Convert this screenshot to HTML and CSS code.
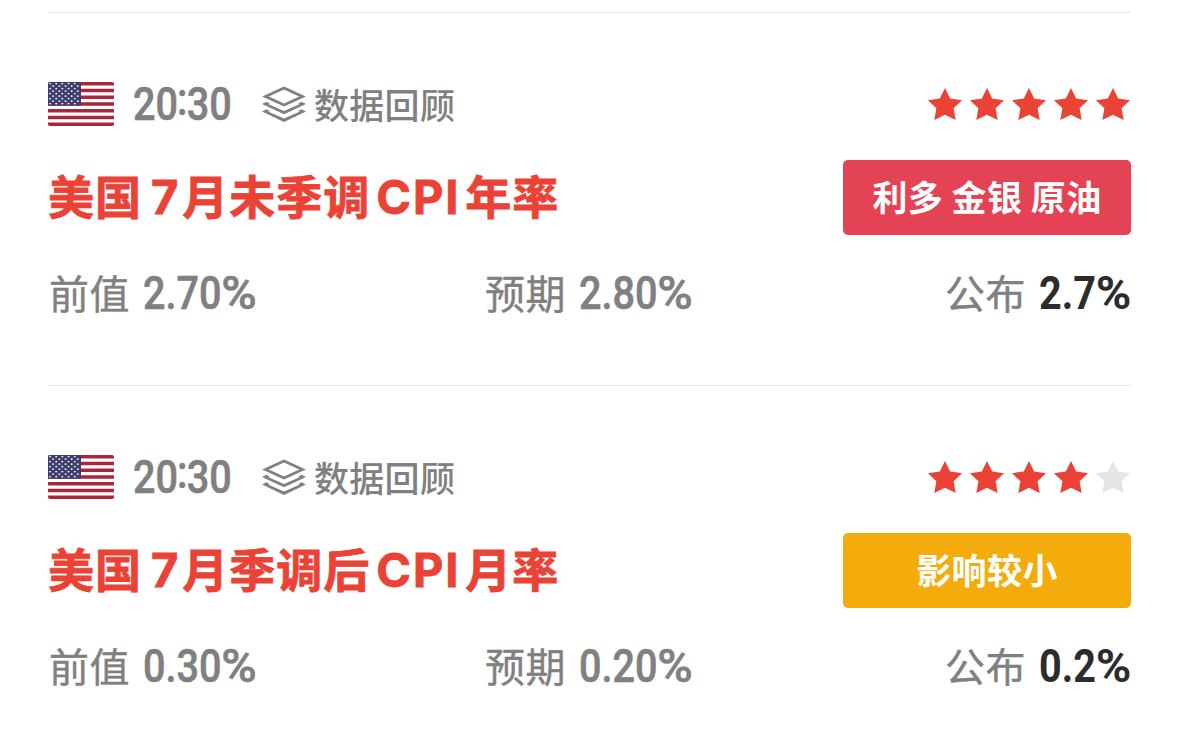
FILE: index.html
```html
<!DOCTYPE html>
<html lang="zh-CN">
<head>
    <meta charset="UTF-8">
    <meta name="viewport" content="width=device-width, initial-scale=1.0">
    <title>财经日历</title>
    <link rel="stylesheet" href="styles.css">
</head>
<body>
    <!-- shared shapes -->
    <svg class="defs" width="0" height="0">
        <defs>
            <pattern id="dots" width="6.2" height="5" patternUnits="userSpaceOnUse">
                <circle cx="2" cy="1.6" r="0.95" fill="#fff"/>
                <circle cx="5.1" cy="4.1" r="0.95" fill="#fff"/>
            </pattern>
            <symbol id="flag" viewBox="0 0 66 44">
                <rect width="66" height="44" fill="#fff"/>
                <path d="M0 1.7H66M0 8.46H66M0 15.22H66M0 22H66M0 28.76H66M0 35.54H66M0 42.3H66" stroke="#a8273a" stroke-width="3.4"/>
                <rect width="33" height="23.6" fill="#3c3b6e"/>
                <rect x="1" y="0.5" width="31" height="22.5" fill="url(#dots)"/>
            </symbol>
            <symbol id="layers" viewBox="0 0 44 36">
                <path d="M22 2 L40.5 10.5 L22 19 L3.5 10.5 Z" fill="none" stroke="#808080" stroke-width="2.8"/>
                <path d="M0 18 L4.5 15.8 L7.5 17.5 L6.6 18.3 L22 24.9 L37.4 18.3 L36.5 17.5 L39.5 15.8 L44 18 L22 28.3 Z" fill="#808080"/>
                <path d="M0 25.5 L4.5 23.3 L7.5 25 L6.6 25.8 L22 32.4 L37.4 25.8 L36.5 25 L39.5 23.3 L44 25.5 L22 35.9 Z" fill="#808080"/>
            </symbol>
            <symbol id="star" viewBox="0 0 34 32">
                <path d="M17 0 L22.2 10.4 L34 12.2 L25.6 20.3 L27.7 32 L17 26.8 L6.3 32 L8.4 20.3 L0 12.2 L11.8 10.4 Z"/>
            </symbol>
        </defs>
    </svg>

    <div class="list">
        <div class="item">
            <div class="head">
                <svg class="flag"><use href="#flag"/></svg>
                <div class="time"><span class="num">20<span class="colon">:</span>30</span></div>
                <svg class="layers"><use href="#layers"/></svg>
                <span class="review">数据回顾</span>
                <div class="stars">
                    <svg class="star"><use href="#star"/></svg>
                    <svg class="star"><use href="#star"/></svg>
                    <svg class="star"><use href="#star"/></svg>
                    <svg class="star"><use href="#star"/></svg>
                    <svg class="star"><use href="#star"/></svg>
                </div>
            </div>
            <div class="main">
                <h2 class="title">美国<span class="seven">7</span>月未季调<span class="cpi">CPI</span>年率</h2>
                <div class="badge badge-red">利多 金银 原油</div>
            </div>
            <div class="values">
                <div class="value"><span class="label">前值</span><div class="figure"><span class="num">2.70<span class="percent">%</span></span></div></div>
                <div class="value"><span class="label">预期</span><div class="figure"><span class="num">2.80<span class="percent">%</span></span></div></div>
                <div class="value"><span class="label">公布</span><div class="figure actual"><span class="num">2.7<span class="percent">%</span></span></div></div>
            </div>
        </div>

        <div class="item">
            <div class="head">
                <svg class="flag"><use href="#flag"/></svg>
                <div class="time"><span class="num">20<span class="colon">:</span>30</span></div>
                <svg class="layers"><use href="#layers"/></svg>
                <span class="review">数据回顾</span>
                <div class="stars">
                    <svg class="star"><use href="#star"/></svg>
                    <svg class="star"><use href="#star"/></svg>
                    <svg class="star"><use href="#star"/></svg>
                    <svg class="star"><use href="#star"/></svg>
                    <svg class="star off"><use href="#star"/></svg>
                </div>
            </div>
            <div class="main">
                <h2 class="title">美国<span class="seven">7</span>月季调后<span class="cpi">CPI</span>月率</h2>
                <div class="badge badge-orange">影响较小</div>
            </div>
            <div class="values">
                <div class="value"><span class="label">前值</span><div class="figure"><span class="num">0.30<span class="percent">%</span></span></div></div>
                <div class="value"><span class="label">预期</span><div class="figure"><span class="num">0.20<span class="percent">%</span></span></div></div>
                <div class="value"><span class="label">公布</span><div class="figure actual"><span class="num">0.2<span class="percent">%</span></span></div></div>
            </div>
        </div>
    </div>
</body>
</html>
```
FILE: styles.css
```css
* {
    margin: 0;
    padding: 0;
    box-sizing: border-box;
}

body {
    font-family: Inter, "Noto Sans CJK SC", sans-serif;
    background-color: #fff;
    color: #808080;
    text-autospace: no-autospace;
    overflow: hidden;
}

.defs {
    display: block;
}

.list {
    padding: 12px 48px 0;
}

.item {
    height: 373px;
    padding-top: 69px;
    border-top: 1px solid #e5e5e5;
}

.head {
    display: flex;
    align-items: center;
    height: 44px;
}

.flag {
    width: 66px;
    height: 44px;
    border-radius: 2px;
}

/* condensed figures */
.num {
    display: inline-block;
    font-family: Roboto, sans-serif;
    font-size: 46px;
    font-weight: 500;
    line-height: 50px;
    white-space: nowrap;
    transform: scaleX(0.86);
    transform-origin: left center;
    -webkit-text-stroke: 0.6px;
}

.percent {
    display: inline-block;
    transform: scaleX(1.22);
    transform-origin: left center;
}

.time {
    width: 98px;
    margin-left: 19px;
}

.colon {
    display: inline-block;
    margin: 0 -1px;
    transform: translateY(-5px);
}

.layers {
    width: 44px;
    height: 36px;
    margin-left: 31px;
}

.review {
    margin-left: 8px;
    padding-bottom: 1px;
    font-family: "Noto Sans CJK SC", sans-serif;
    font-size: 35px;
    line-height: 44px;
    font-weight: 500;
    letter-spacing: 0.3px;
}

.stars {
    display: flex;
    gap: 8px;
    margin-left: auto;
    margin-right: 1px;
}

.star {
    width: 34px;
    height: 32px;
    fill: #ea4335;
}

.star.off {
    fill: #e5e5e5;
}

.main {
    display: flex;
    align-items: center;
    justify-content: space-between;
    height: 75px;
    margin-top: 34px;
}

.title {
    color: #ea4335;
    font-size: 46px;
    font-weight: 700;
    line-height: 73px;
    padding-bottom: 2px;
    letter-spacing: 1px;
    white-space: nowrap;
    -webkit-text-stroke: 0.8px #ea4335;
}

.seven,
.cpi {
    font-size: 47px;
}

.seven {
    margin: 0 3px 0 9px;
}

.cpi {
    margin: 0 5px 0 6px;
    letter-spacing: 1.8px;
}

.badge {
    width: 288px;
    height: 75px;
    border-radius: 5px;
    color: #fff;
    font-family: "Noto Sans CJK SC", sans-serif;
    font-size: 35px;
    font-weight: 700;
    line-height: 71px;
    letter-spacing: 0.4px;
    text-align: center;
}

.badge-red {
    background-color: #e34354;
}

.badge-orange {
    background-color: #f4ac0d;
}

.values {
    display: grid;
    grid-template-columns: 436px 1fr auto;
    height: 50px;
    margin-top: 33px;
}

.value {
    display: flex;
    align-items: center;
}

.label {
    padding: 0 0 2px 1px;
    font-family: "Noto Sans CJK SC", sans-serif;
    font-size: 40px;
    line-height: 48px;
    letter-spacing: 0.5px;
    -webkit-text-stroke: 0.4px;
}

.figure {
    width: 113px;
    margin-left: 13px;
}

.figure.actual {
    width: 92px;
    color: #2c2c2c;
}

.actual .num {
    font-weight: 700;
    -webkit-text-stroke: 0;
}
```
